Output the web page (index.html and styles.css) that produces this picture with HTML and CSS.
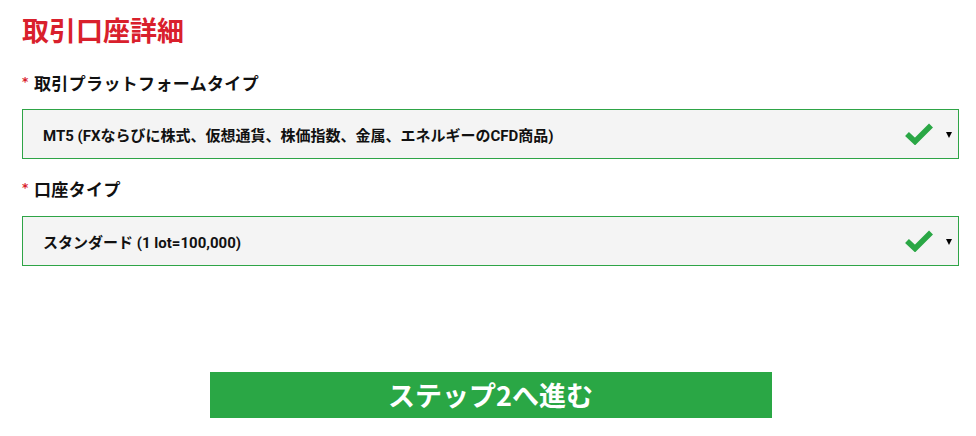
FILE: index.html
```html
<!DOCTYPE html>
<html lang="ja">
<head>
<meta charset="utf-8">
<title>取引口座詳細</title>
<link rel="stylesheet" href="styles.css">
</head>
<body>
<main class="form">
  <h1 class="title">取引口座詳細</h1>

  <div class="field">
    <div class="label"><span class="req">*</span>取引プラットフォームタイプ</div>
    <div class="select">
      <span class="value">MT5 (FXならびに株式、仮想通貨、株価指数、金属、エネルギーのCFD商品)</span>
      <svg class="check" width="28" height="24" viewBox="0 0 28 24"><polyline points="2,13 10,20.5 26,4.5" fill="none" stroke="#2aa745" stroke-width="5.6" stroke-linejoin="miter"/></svg>
      <span class="arrow"></span>
    </div>
  </div>

  <div class="field second">
    <div class="label"><span class="req">*</span>口座タイプ</div>
    <div class="select">
      <span class="value">スタンダード (1 lot=100,000)</span>
      <svg class="check" width="28" height="24" viewBox="0 0 28 24"><polyline points="2,13 10,20.5 26,4.5" fill="none" stroke="#2aa745" stroke-width="5.6" stroke-linejoin="miter"/></svg>
      <span class="arrow"></span>
    </div>
  </div>

  <button class="next" type="button">ステップ2へ進む</button>
</main>
</body>
</html>
```

FILE: styles.css
```css
html, body {
  margin: 0;
  padding: 0;
  background: #ffffff;
}

body {
  font-family: Roboto, "Noto Sans CJK JP", sans-serif;
  color: #111111;
}

.form {
  display: flex;
  flex-direction: column;
  padding: 12px 17px 0 22px;
}

.title {
  margin: 0;
  font-family: "Noto Sans CJK JP", sans-serif;
  font-size: 27px;
  line-height: 36px;
  font-weight: 700;
  color: #d9202c;
}

.field {
  display: flex;
  flex-direction: column;
  margin-top: 23px;
}

.field.second {
  margin-top: 18px;
}

.label {
  display: flex;
  align-items: center;
  font-family: "Noto Sans CJK JP", sans-serif;
  font-size: 17px;
  line-height: 24px;
  font-weight: 700;
  letter-spacing: 0.35px;
  color: #111111;
}

.req {
  color: #d9202c;
  font-family: "DejaVu Sans", sans-serif;
  font-size: 12px;
  line-height: 12px;
  width: 12px;
  letter-spacing: 0;
  margin-top: -2px;
}

.select {
  display: flex;
  align-items: center;
  height: 48px;
  margin-top: 14px;
  border: 1px solid #2ea446;
  background: #f4f4f4;
  padding: 0 6px 0 20px;
}

.field.second .select {
  margin-top: 15px;
}

.value {
  flex: 1;
  font-size: 15px;
  font-weight: 700;
  color: #111111;
}

.check {
  display: block;
  margin-right: 13px;
  margin-top: -2px;
  margin-left: 2px;
}

.arrow {
  width: 0;
  height: 0;
  border-left: 3px solid transparent;
  border-right: 3px solid transparent;
  border-top: 6px solid #000000;
  margin-top: 2px;
}

.next {
  align-self: center;
  width: 562px;
  height: 46px;
  margin-top: 106px;
  border: none;
  background: #2aa745;
  color: #ffffff;
  font-family: "Noto Sans CJK JP", sans-serif;
  font-size: 27px;
  font-weight: 700;
  line-height: 46px;
  padding: 0;
  cursor: pointer;
}
```
